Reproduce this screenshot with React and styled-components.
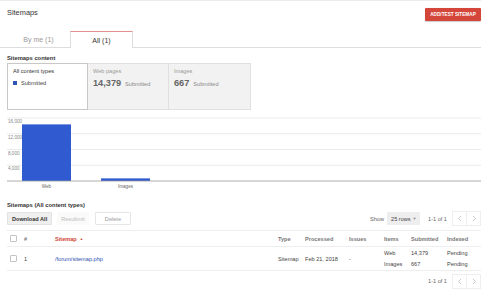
import React from 'react'
import styled, { createGlobalStyle } from 'styled-components'

const Global = createGlobalStyle`
  body {
    margin: 0;
    background: #fff;
    font-family: 'Liberation Sans', Arial, sans-serif;
    color: #222;
  }
`

const Page = styled.div`
  width: 481px;
`

const Header = styled.div`
  height: 30px;
  border-top: 1px solid #ececec;
  display: flex;
  justify-content: space-between;
  align-items: flex-start;
  padding-left: 7px;
`

const Title = styled.div`
  margin-top: 8px;
  font-size: 7.4px;
  line-height: 8px;
  color: #333;
`

const RedButton = styled.div`
  margin-top: 7px;
  height: 13px;
  width: 56px;
  background: #d4463a;
  border-radius: 1px;
  color: #fff;
  font-weight: bold;
  font-size: 4.7px;
  display: flex;
  align-items: center;
  justify-content: center;
  box-shadow: 0 0.5px 1px rgba(0,0,0,0.2);
`

const Tabs = styled.div`
  display: flex;
  height: 16px;
  padding-left: 7px;
  border-bottom: 1px solid #ddd;
`

const Tab = styled.div`
  width: 63px;
  box-sizing: border-box;
  display: flex;
  align-items: center;
  justify-content: center;
  font-size: 7px;
  color: ${p => (p.active ? '#333' : '#999')};
  background: #fff;
  ${p => p.active && `
    border: 1px solid #ddd;
    border-top: 1px solid #e48f8f;
    border-bottom: none;
    height: 17px;
  `}
`

const SectionLabel = styled.div`
  padding-left: 7px;
  margin-top: ${p => p.top || 6}px;
  font-size: 5.8px;
  line-height: 8px;
  font-weight: bold;
  color: #333;
`

const Cards = styled.div`
  display: flex;
  margin: 1px 0 0 7px;
  height: 47px;
`

const Card = styled.div`
  width: ${p => p.w}px;
  box-sizing: border-box;
  padding: 4px 5px;
  background: ${p => (p.active ? '#fff' : '#f2f2f2')};
  border: 1px solid ${p => (p.active ? '#c8c8c8' : '#e0e0e0')};
  border-left: ${p => (p.first ? '1px solid #c8c8c8' : 'none')};
`

const CardLabel = styled.div`
  font-size: 5.6px;
  line-height: 7px;
  color: ${p => (p.dark ? '#333' : '#999')};
`

const Legend = styled.div`
  display: flex;
  align-items: center;
  gap: 4px;
  margin-top: 5px;
  font-size: 5.6px;
  color: #444;
`

const Swatch = styled.span`
  width: 4px;
  height: 4px;
  background: #2f55b5;
`

const Stat = styled.div`
  display: flex;
  align-items: baseline;
  gap: 4px;
  margin-top: 3px;
  color: #666;
`

const BigNum = styled.span`
  font-size: 9.2px;
  font-weight: bold;
`

const Small = styled.span`
  font-size: 5.6px;
  color: #888;
`

const ChartBox = styled.div`
  margin: 5px 0 0 7px;
  height: 75px;
`

const Toolbar = styled.div`
  display: flex;
  align-items: center;
  margin-top: 3px;
  padding-left: 7px;
  height: 13px;
`

const Btn = styled.div`
  height: 13px;
  box-sizing: border-box;
  padding: 0 ${p => p.px || 5}px;
  margin-right: ${p => p.mr || 0}px;
  display: flex;
  align-items: center;
  justify-content: center;
  font-size: 5.6px;
  border-radius: 1px;
  ${p => p.kind === 'primary' && `
    background: #efefef;
    border: 1px solid #e2e2e2;
    color: #333;
    font-weight: bold;
  `}
  ${p => p.kind === 'disabled' && `
    background: #fafafa;
    color: #bbb;
  `}
  ${p => p.kind === 'plain' && `
    background: #fff;
    border: 1px solid #e6e6e6;
    color: #999;
  `}
`

const Spacer = styled.div`
  flex: 1;
`

const Muted = styled.span`
  font-size: 5.6px;
  color: #666;
  margin-right: ${p => p.mr || 0}px;
`

const Select = styled.div`
  height: 13px;
  width: 33px;
  box-sizing: border-box;
  background: #eee;
  display: flex;
  align-items: center;
  padding-left: 4px;
  gap: 2px;
  font-size: 5.6px;
  color: #444;
  margin-right: 8px;
`

const Caret = styled.span`
  font-size: 4px;
  color: #888;
`

const Pager = styled.div`
  display: flex;
  margin-left: 5px;
`

const PageBtn = styled.div`
  width: 15px;
  height: 15px;
  box-sizing: border-box;
  border: 1px solid #eee;
  margin-left: ${p => (p.second ? '-1px' : 0)};
  display: flex;
  align-items: center;
  justify-content: center;
`

const Table = styled.div`
  margin: 5px 0 0 7px;
  width: 474px;
`

const Row = styled.div`
  display: grid;
  grid-template-columns: 14px 31px 223px 27px 44px 35px 27px 36px 1fr;
  grid-template-rows: ${p => (p.head ? '15px' : '11px 11px')};
  padding: ${p => (p.head ? '0' : '0.5px')} 0 0 3px;
  border-top: ${p => (p.head ? '1px solid #eee' : 'none')};
  border-bottom: 1px solid #eee;
  align-items: center;
  font-size: 5.6px;
  color: ${p => (p.head ? '#777' : '#444')};
  font-weight: ${p => (p.head ? 'bold' : 'normal')};
`

const Cell = styled.div`
  grid-row: ${p => (p.span ? 'span 2' : 'auto')};
  color: ${p => p.color || 'inherit'};
  white-space: nowrap;
`

const Check = styled.div`
  width: 5px;
  height: 5px;
  border: 1px solid #c4c4c4;
  border-radius: 1px;
`

const SortArrow = styled.span`
  font-size: 3.5px;
  margin-left: 3px;
  vertical-align: 1px;
`

const Footer = styled.div`
  display: flex;
  justify-content: flex-end;
  align-items: center;
  margin-top: 3px;
`

const Chevron = ({ dir }) => (
  <svg width="6" height="7" viewBox="0 0 6 7">
    <polyline
      points={dir === 'left' ? '4,1 1.5,3.5 4,6' : '2,1 4.5,3.5 2,6'}
      fill="none"
      stroke="#bbb"
      strokeWidth="0.8"
    />
  </svg>
)

const Chart = () => {
  const lines = [
    { y: 3, label: '16,000' },
    { y: 18.75, label: '12,000' },
    { y: 34.5, label: '8,000' },
    { y: 50.25, label: '4,000' },
  ]
  const base = 66
  const scale = (base - 3) / 16000
  return (
    <svg width="474" height="75" viewBox="0 0 474 75">
      {lines.map(l => (
        <g key={l.label}>
          <line x1="0" x2="474" y1={l.y} y2={l.y} stroke="#e6e6e6" strokeWidth="0.8" />
          <text x="1" y={l.y + 5} fontSize="4.6" fill="#888" fontFamily="Liberation Sans, Arial, sans-serif">
            {l.label}
          </text>
        </g>
      ))}
      <rect x="15" y={base - 14379 * scale} width="49" height={14379 * scale} fill="#2f5ad0" />
      <rect x="94" y={base - 667 * scale} width="49" height={667 * scale} fill="#2f5ad0" />
      <line x1="0" x2="474" y1={base} y2={base} stroke="#999" strokeWidth="0.8" />
      <text x="39.5" y="73" fontSize="4.6" fill="#666" textAnchor="middle" fontFamily="Liberation Sans, Arial, sans-serif">Web</text>
      <text x="118.5" y="73" fontSize="4.6" fill="#666" textAnchor="middle" fontFamily="Liberation Sans, Arial, sans-serif">Images</text>
    </svg>
  )
}

const PagerGroup = () => (
  <>
    <Muted>1-1 of 1</Muted>
    <Pager>
      <PageBtn><Chevron dir="left" /></PageBtn>
      <PageBtn second><Chevron dir="right" /></PageBtn>
    </Pager>
  </>
)

export default function App() {
  return (
    <Page>
      <Global />
      <Header>
        <Title>Sitemaps</Title>
        <RedButton>ADD/TEST SITEMAP</RedButton>
      </Header>
      <Tabs>
        <Tab>By me (1)</Tab>
        <Tab active>All (1)</Tab>
      </Tabs>
      <SectionLabel>Sitemaps content</SectionLabel>
      <Cards>
        <Card w={81} active first>
          <CardLabel dark>All content types</CardLabel>
          <Legend><Swatch />Submitted</Legend>
        </Card>
        <Card w={81}>
          <CardLabel>Web pages</CardLabel>
          <Stat><BigNum>14,379</BigNum><Small>Submitted</Small></Stat>
        </Card>
        <Card w={82}>
          <CardLabel>Images</CardLabel>
          <Stat><BigNum>667</BigNum><Small>Submitted</Small></Stat>
        </Card>
      </Cards>
      <ChartBox>
        <Chart />
      </ChartBox>
      <SectionLabel top={11}>Sitemaps (All content types)</SectionLabel>
      <Toolbar>
        <Btn kind="primary" px={4} mr={5}>Download All</Btn>
        <Btn kind="disabled" px={4} mr={6}>Resubmit</Btn>
        <Btn kind="plain" px={9}>Delete</Btn>
        <Spacer />
        <Muted mr={3}>Show</Muted>
        <Select>25 rows <Caret>▼</Caret></Select>
        <PagerGroup />
      </Toolbar>
      <Table>
        <Row head>
          <Cell><Check /></Cell>
          <Cell>#</Cell>
          <Cell color="#d23f31">Sitemap<SortArrow>▲</SortArrow></Cell>
          <Cell>Type</Cell>
          <Cell>Processed</Cell>
          <Cell>Issues</Cell>
          <Cell>Items</Cell>
          <Cell>Submitted</Cell>
          <Cell>Indexed</Cell>
        </Row>
        <Row>
          <Cell span><Check /></Cell>
          <Cell span>1</Cell>
          <Cell span color="#2a4fb0">/forum/sitemap.php</Cell>
          <Cell span>Sitemap</Cell>
          <Cell span>Feb 21, 2018</Cell>
          <Cell span>-</Cell>
          <Cell>Web</Cell>
          <Cell>14,379</Cell>
          <Cell>Pending</Cell>
          <Cell>Images</Cell>
          <Cell>667</Cell>
          <Cell>Pending</Cell>
        </Row>
        <Footer>
          <PagerGroup />
        </Footer>
      </Table>
    </Page>
  )
}
